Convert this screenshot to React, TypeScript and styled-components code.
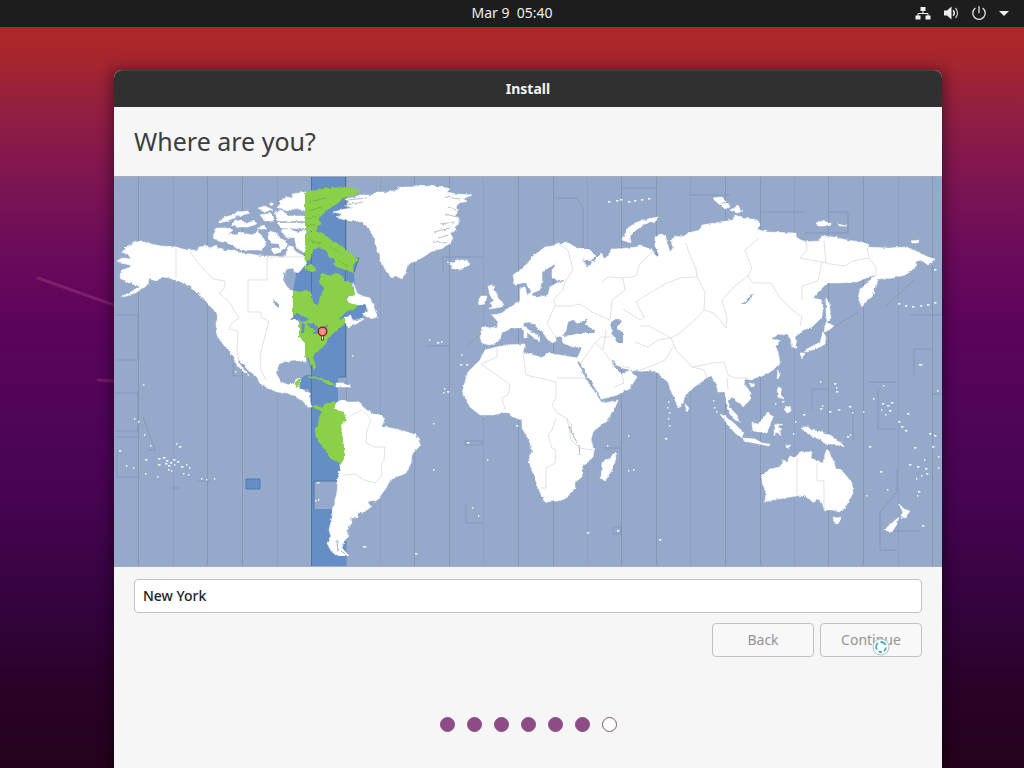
import React from "react";
import styled, { createGlobalStyle } from "styled-components";

const GlobalStyle = createGlobalStyle`
  *, *::before, *::after { box-sizing: border-box; }
  body { margin: 0; font-family: "Noto Sans", "Open Sans", sans-serif; font-size: 14px; color: #3d3d3d; }
`;

const Desktop = styled.div`
  position: relative;
  display: flex;
  flex-direction: column;
  min-height: 100vh;
  overflow: hidden;
  background: linear-gradient(#b02828 27px, #a5262e 60px, #8f1d45 120px, #7a1453 190px, #690a5b 260px, #5b045b 330px, #4f0558 420px, #450450 510px, #33033d 610px, #2a0228 690px, #24021c 768px);
`;

const Streaks = styled.svg`
  position: absolute;
  left: 0;
  top: 0;
  width: 114px;
  height: 400px;
`;

const TopBar = styled.header`
  position: relative;
  display: grid;
  grid-template-columns: 1fr auto 1fr;
  align-items: center;
  height: 27px;
  padding: 0 15px 2px;
  background: #1d1d1d;
  color: #eeeeee;
`;

const Clock = styled.time`
  grid-column: 2;
  font-size: 14px;
  line-height: 20px;
  white-space: pre;
`;

const StatusArea = styled.div`
  grid-column: 3;
  justify-self: end;
  display: flex;
  align-items: center;
  gap: 12px;

  svg { display: block; }
`;

const Workspace = styled.main`
  position: relative;
  flex: 1;
  display: flex;
  padding: 43px 82px 0 114px;
`;

const InstallerWindow = styled.section`
  flex: 1;
  min-width: 0;
  display: flex;
  flex-direction: column;
  border-radius: 8px 8px 0 0;
  background: #f6f6f6;
  box-shadow: 0 2px 14px 3px rgba(0, 0, 0, 0.42);
`;

const TitleBar = styled.div`
  height: 37px;
  border-top: 1px solid #414141;
  border-radius: 8px 8px 0 0;
  background: #303030;
  color: #f4f4f4;
  font-size: 14px;
  font-weight: 700;
  line-height: 36px;
  text-align: center;
`;

const Heading = styled.h1`
  margin: 0;
  padding: 0 20px;
  font-size: 25px;
  font-weight: 400;
  line-height: 69px;
`;

const MapSvg = styled.svg`
  display: block;
  width: 100%;
  height: auto;
  background: #95aacb;
`;

const Form = styled.form`
  display: flex;
  flex-direction: column;
  gap: 10px;
  padding: 12px 20px 0;
`;

const LocationInput = styled.input`
  width: 100%;
  height: 34px;
  padding: 0 8px 2px;
  border: 1px solid #c2c2c2;
  border-radius: 4px;
  outline: none;
  background: #ffffff;
  color: #222222;
  font: 500 14px/20px "Noto Sans", "Open Sans", sans-serif;
`;

const ButtonRow = styled.div`
  display: flex;
  justify-content: flex-end;
  gap: 6px;
`;

const NavButton = styled.button`
  position: relative;
  width: 102px;
  height: 34px;
  padding: 0;
  border: 1px solid #c2c2c2;
  border-radius: 4px;
  background: #f8f8f8;
  color: #949494;
  font: 400 14px/20px "Noto Sans", "Open Sans", sans-serif;
`;

const BusyPointer = styled.svg`
  position: absolute;
  right: 31px;
  bottom: 0;
`;

const Progress = styled.ol`
  display: flex;
  justify-content: center;
  gap: 12px;
  margin: 60px 0 36px;
  padding: 0;
  list-style: none;
`;

const Step = styled.li<{ $done: boolean }>`
  width: 15px;
  height: 15px;
  border: 1px solid ${(p) => (p.$done ? "#8d4c86" : "#77586f")};
  border-radius: 50%;
  background: ${(p) => (p.$done ? "#8d4c86" : "#ffffff")};
`;

const HOUR_LINES = [138, 173, 207, 242, 277, 311, 346, 380, 414, 449, 483, 518, 553, 587, 621, 656, 690, 725, 760, 794, 828, 863, 898, 932];

const ZONE_BOXES =
  "M115 315H138V360H115M115 393H138V431H115M115 437H138M143 417L155 450H147M117 450V477H138M172 488H180M196 481H210M233 364V376H242M443 272V257H483M553 198H577L583 208V248M621 188H656M690 195H730M805 233H848V212H828M760 212H805M465 441V445H482V441ZM466 503V523H483M605 448H621M613 527H621V534H613ZM812 410V389H828M868 382H896M878 390V429H896M932 394H942M914 375V349H932M880 550V512L897 492V470M880 550H897M893 531H920M832 328L858 312M886 306L914 280M910 315H942M426 346H450M467 346L485 330M853 410V440";

const WHITE_LAND = [
  // Alaska, Canada, United States, Mexico and Central America
  "M121 252L126 249L124 247L132 244L135 242L141 241L151 244L161 246L176 247L186 250L197 250L199 247L207 246L209 249L214 246L224 250L234 250L241 253L251 254L261 256L271 256L281 257L286 255L287 248L291 245L296 252L306 257V263L301 270L297 274L293 268L287 269L284 273L283 280L287 287L294 292V317L300 320V337L305 343L306 362L294 360L284 362L279 364L276 373L281 382L289 385L294 383L296 379L301 378L299 387L300 389L310 393V402L312 407L307 407L304 402L296 397L287 393L277 392L264 386L259 382L257 377L251 372L244 365L239 360L238 362L243 368L249 376L246 374L237 365L231 353L222 343L217 335L216 323L218 317L214 310L208 304L204 300L197 293L191 287L179 281L169 278L161 277L157 281L149 279L148 285L137 292L127 296L121 297L131 292L141 285L134 285L132 282L126 282L120 277L122 270L131 267L130 265L121 263L117 261L122 258L131 259L128 254Z",
  // Arctic islands
  "M213 238L216 228L226 228L233 230L228 234L236 235L240 232L252 235L258 231L264 239L266 245L261 250L240 250L228 243L219 241Z",
  "M218 222L225 217L233 215L236 217L229 220L224 222ZM232 225L235 220L243 221L246 224L254 220L257 224L248 227L238 227ZM233 215L238 212L248 211L249 213L239 216ZM258 208L265 206L273 210L264 212ZM260 215L272 213L274 221L265 221ZM263 225L267 229H257ZM270 231L278 234L280 244L271 243L268 237ZM282 230L289 229L297 232L295 237L286 239ZM279 238L284 240L288 245L283 250L279 246ZM277 223L306 223V229L282 228ZM275 212L282 210L288 216H306V221H278ZM280 201L286 197L293 198L292 194L306 192V211L293 208L288 211L281 208ZM294 233L306 230V254L296 247ZM271 248H282L280 253H273ZM278 205H281V208H278ZM270 203H273V205H270Z",
  // Greenland
  "M333 212L345 209L353 208L345 205L350 202L345 199L355 197L360 195L372 195L377 192L388 192L397 190L400 187L412 187L420 185L434 186L443 187L450 189L447 192L456 194L472 195L463 199L467 201L459 203L456 207L459 210L455 216L459 218L458 225L454 227L457 230L450 233L453 238L450 243L443 248L430 252L425 256L418 260L410 263L407 267L405 273L402 279L396 276L393 278L387 273L383 265L380 261V254L377 252V246L375 244V238L370 230L362 222L350 221L337 218L342 214Z",
  // Labrador, Newfoundland and Nova Scotia
  "M353 282L357 293L362 296L370 298L373 305L368 309L364 305H350L346 300L349 296L355 295ZM369 302L373 305L376 313L378 318L367 317L362 314L368 312ZM345 317L351 316L353 321L364 319L356 324L348 327L345 323Z",
  // Iceland
  "M447 262L453 263L456 260L467 260L469 264L466 267L458 270L451 268L453 265Z",
  // South America
  "M333 402L336 403L341 400L347 402L359 402L364 408L371 413L381 415L384 420L382 427L391 428L404 431L410 433L416 435L420 440L419 447L412 453L411 463L406 473L397 477L390 480L387 487L381 495L376 502L367 501L371 507L364 512L357 513V518H351L352 523L346 530L349 535L344 542L342 548L349 556L337 556L331 551L327 543L331 537L329 530L332 517L333 507L337 493L338 477L341 464L343 440L340 425V411L334 409Z",
  // Europe, Asia and Africa
  "M513 275L520 270L528 263L532 257L537 253L545 247L552 246L558 243L562 244L565 242L570 244L577 248L590 250L596 256L590 261L582 259L587 267L595 260L602 253L603 258L610 255L611 249L618 249L637 247L640 245L647 248L652 250L657 257L659 255L655 246L655 237L662 233L666 237L667 243L670 252L673 248L671 241L674 236L683 237L688 233L700 230L702 225L720 222L733 220L735 215L745 218L757 220L761 224L757 229L767 232L795 233L797 238L805 242L818 241L822 236L833 237L847 240L867 243L868 247L887 248L907 247L920 253L928 257L935 259L933 262L928 265L921 260L915 262L917 265L912 270L905 275L893 278L878 279L875 287L873 295L868 299L862 307L858 298L860 290L868 282L876 275L868 277L857 282L837 283L827 283L817 293L813 298L822 300L823 307L822 317L812 327L803 330L795 337L797 348H792L791 340L788 334L782 335L778 334L772 339L781 341L775 346L778 352L780 363L773 370L765 375L755 378L752 380L745 379L744 383L750 392V400L743 407L740 403L732 397L729 400V407L737 415L739 423L733 418L727 408L726 400L725 392L718 392L716 383L712 377L707 378L700 383L693 388L685 395L683 403L679 408L677 405L672 393L668 382L663 378L660 375L655 371H637L627 369L622 368L617 365L612 359V362L615 368L620 373L623 374L630 370L633 373L637 377L630 388L617 395L602 399L599 395L593 383L585 372L579 361L577 362L583 373L588 383L597 395L601 402L605 403L618 400L615 408L607 420L593 432L591 440L594 450L593 457L582 467V477L575 482V488L565 499L557 501L545 502L542 497L538 487L533 473L528 462L532 452L530 442L522 428V420L513 417L505 412L493 415H480L470 407L462 393L465 382L468 372L480 360L485 350L493 348L505 345L525 344L523 352L543 358L548 353L577 358L580 353L582 347L573 347L563 343L562 337L555 335L556 340L553 343L548 340L544 334L538 328L530 322L523 323L526 328L533 333L540 337L537 340L528 333L520 328L510 328L502 333L498 342L490 345L482 343L480 337L482 327L497 328L498 322L492 315L502 313L510 307L520 300V288L525 287L527 295L540 297L548 295L550 287L557 283L568 280L557 280L552 277V270L557 263L550 267L542 272V280L540 290L532 293L528 287L526 282L515 285Z",
  // British Isles, Denmark and the Mediterranean islands
  "M488 286L494 286L492 290L496 292L498 298L503 303L502 307L489 309L493 306L490 303L494 301L490 295ZM481 296H487L485 304L479 305L478 301ZM528 293L532 292V297H529ZM536 339L540 337L539 343ZM524 331H527V338H524Z",
  // Russian Arctic
  "M622 240L628 228L635 223L643 220L658 217L656 221L645 224L636 230L630 236L631 243ZM712 198L722 197L726 201L719 204ZM719 204L727 203L730 206L725 209ZM730 210L738 206L742 211L737 213ZM816 223L822 221L831 223L829 226H818ZM837 224L847 226H840ZM911 241L919 240L918 243H912Z",
  // Japan, Sakhalin, Taiwan and Hainan
  "M826 298L829 302L831 318L827 322L826 312ZM826 322L834 326L829 330L824 332ZM823 332L826 337L825 344L818 348L812 350L807 352L804 351L814 345L820 343ZM800 353L805 353L802 359ZM778 370L780 376L777 378ZM750 383L755 385L751 387Z",
  // South East Asia
  "M720 414L728 418L736 425L743 433L742 438L735 433L728 425ZM743 438L755 439L762 443L770 444L769 446L744 441ZM752 423L758 424L762 420L768 412L773 417L770 425L767 433L760 432L753 431ZM774 425L783 424L777 427L782 429L779 431L781 436L777 432L774 436ZM777 387L782 388L780 394L784 399L778 397ZM784 409L790 405L791 411L787 413ZM802 427L808 427L811 430L823 432L832 436L837 440L845 447L834 444L825 444L821 440L812 436L805 432ZM685 404L689 408L687 412ZM785 446L791 445L788 448Z",
  // Australia, Tasmania and New Zealand
  "M762 475L770 469L780 467L784 460L787 462L790 456L795 458L800 452L812 452L811 457L818 462L823 463L826 450L829 451L831 457L834 460L835 467L843 472L848 478L852 483L853 493L845 508L839 512L833 510L825 510L822 505L820 500L816 499L813 502L803 495L790 497L773 500L765 502L766 492L762 482ZM833 517L837 518L841 517L839 523L836 524ZM898 503L904 509L910 511L905 518L901 517L903 512ZM899 517L897 524L892 532L884 530L892 523Z",
  // Madagascar and Hispaniola
  "M615 452L616 458L612 470L605 481L601 478L602 463L611 457ZM336 383L343 383L351 387L336 387Z",
];

const GREEN_LAND = [
  "M305 193L313 190L323 188L350 187L360 191L355 195L343 198L337 204L332 207L323 214L318 219L322 224L317 226L316 231L305 231Z",
  "M305 234L315 231L323 233L328 238L334 241L340 245L347 250L352 255L359 260L355 262L353 267L354 273L345 270L337 267L333 264L335 260L329 256L327 252L320 247L313 250L311 258L306 262L305 255Z",
  "M303 267L311 264L318 270L312 272L306 270ZM322 273L330 276L337 272L343 277L345 281L352 283L355 295L346 297L349 303L358 305L353 311L345 315V323L337 330L328 338L325 345L317 352L313 357L316 367L314 370L310 362L308 357L305 357V343L299 337V321L293 317V290L300 292L306 290L312 293L313 303L318 305L320 297L324 288L319 282Z",
  "M311 407L316 405L322 408L325 404L334 401L336 404L334 409L344 412L346 420L341 425L342 435L344 447V459L341 464L331 459L326 452L319 442L315 435V428L318 425L319 417L322 412L316 408ZM307 376L313 376L321 378L328 381L337 385H329L320 380L310 377ZM294 385L297 380L301 378L299 386L296 388Z",
];

// Bays, lakes and inland seas that lie over land
const SEAS = "M566 332L568 322L573 320L578 324L588 318L585 325L595 330L594 333L580 333L572 335L562 336ZM610 323L617 318L622 321L617 328L623 333V343H617L613 335ZM741 304L746 300L753 293L751 299L745 304ZM273 299L279 304V308L275 305Z";

const ZONE_BORDERS =
  "M176 247V278M190 252L200 265L213 279L225 281L224 289L219 293L230 303L239 318L232 323L229 329L238 331L237 352L239 361M305 257H267V280H248V312H261V317L269 321L264 340L260 355L261 370L266 380M557 243L568 250L573 270L565 282L563 290L554 299L555 306L570 306L580 304L592 312M555 306L547 323L554 335M592 312L610 320M602 282L608 277L623 278L625 290L612 300L610 320M622 278L636 276L640 264L652 252M623 309L640 320L644 317L636 302L643 297L665 284L680 278L697 277L696 269L688 250L686 243M697 277L705 292L704 310L714 313L726 328L727 318L722 300L735 286L748 276L752 269M752 269L745 250L759 238M748 276L753 283H771L780 298L790 308L802 317L800 326M802 300V286L818 281L822 262L810 260L800 258L807 250L806 240M822 262L831 264L845 266L853 261L869 258L867 248M826 263L824 240M869 258L876 267V276M704 310L695 320L680 333L671 338L660 332L649 326L640 326M671 338L676 350L692 367L704 370L707 378M692 367L714 363L724 362L728 375L735 378L748 378M727 378L728 390M673 347L665 360L652 366L640 370M635 342L648 347L658 340L671 338M606 330L603 350L595 343L601 337L613 337M595 343L580 364M604 352L614 365L630 368M614 387L624 383L622 375M497 348V357L481 364L494 373L510 385L508 395L502 398L505 410M523 352L526 375L548 380L556 382V398L552 405L557 413L566 418L572 425L570 433M557 378H587M556 418L552 430L548 435L552 448L556 450L555 463L546 468V488H541M567 418L571 440L580 448L593 450M362 410L352 415L346 420M364 412L371 420L367 430L366 443L374 447L385 447L384 460L381 465L382 475L375 483L364 480L355 474L343 475M797 458V496M817 463V481H824V510";

const LAKES = "M290 320L297 313L305 317L309 320L302 322L298 319ZM302 323L305 324L304 333L301 333ZM307 323L315 324L319 329L315 331L310 327ZM312 333L318 330L321 332L314 334ZM322 327L329 325L327 328ZM338 320L347 311L359 310L351 315Z";

const ISLETS = [
  [143, 384, 1], [134, 418, 1], [138, 421, 1], [144, 434, 1], [150, 445, 1], [119, 450, 2], [126, 465, 1], [133, 467, 1], [145, 459, 2], [157, 476, 1], [145, 473, 1],
  [176, 443, 1], [179, 446, 2], [158, 458, 2], [163, 457, 2], [166, 460, 2], [170, 462, 2], [173, 459, 2], [168, 469, 1], [177, 461, 2], [181, 466, 2], [186, 464, 1], [183, 473, 1], [189, 467, 1], [188, 474, 1], [158, 464, 2], [171, 470, 1], [165, 463, 2], [168, 465, 2], [174, 464, 1], [201, 478, 1], [206, 479, 1], [214, 478, 1],
  [235, 371, 1], [317, 482, 2], [315, 500, 1], [318, 499, 1], [363, 546, 3], [415, 553, 2], [352, 355, 1], [433, 423, 1], [433, 469, 1], [429, 339, 1], [437, 342, 2], [441, 341, 1], [461, 354, 1], [460, 364, 2], [466, 364, 2], [444, 388, 1], [447, 391, 2], [443, 392, 1],
  [467, 442, 2], [487, 459, 1], [516, 425, 2], [472, 507, 1], [478, 515, 1], [587, 532, 2], [617, 530, 2], [659, 539, 2], [607, 445, 1], [628, 435, 1], [628, 470, 1], [633, 469, 1],
  [668, 401, 1], [667, 407, 1], [669, 412, 1], [668, 418, 1], [669, 425, 1], [665, 438, 2], [713, 400, 1], [714, 407, 1], [716, 411, 1],
  [608, 201, 2], [616, 200, 2], [620, 199, 2], [628, 201, 2], [634, 200, 2], [641, 199, 2], [648, 198, 2], [820, 381, 1], [834, 383, 2], [836, 387, 1], [836, 391, 2], [803, 414, 2], [820, 408, 2], [822, 405, 1], [829, 411, 2], [838, 409, 2], [849, 406, 2], [852, 412, 1], [863, 411, 1], [873, 398, 1], [882, 403, 2], [887, 405, 2], [889, 410, 2], [885, 414, 1], [891, 402, 2], [881, 409, 1], [907, 413, 2], [898, 421, 2], [901, 426, 2], [905, 430, 2], [847, 436, 2], [850, 434, 1], [869, 446, 2], [880, 471, 2], [887, 489, 1], [866, 495, 1], [914, 447, 2], [909, 464, 2], [917, 466, 2], [925, 468, 2], [926, 473, 2], [921, 475, 1], [916, 478, 1], [924, 459, 1], [929, 433, 2], [934, 435, 2], [932, 446, 2], [938, 456, 1], [938, 467, 1], [918, 491, 2], [917, 495, 1], [922, 525, 2], [919, 364, 3], [937, 390, 1], [883, 385, 1],
  [898, 303, 2], [905, 305, 2], [912, 306, 2], [920, 305, 2], [927, 304, 2], [934, 302, 2], [934, 269, 2], [775, 403, 1], [782, 401, 2], [785, 406, 1], [795, 421, 1], [793, 433, 1],
];

const TimezoneMap = () => (
  <MapSvg viewBox="114 176 828 391" role="img" aria-label="Time zone map">
    <defs>
      <filter id="coast" x="0" y="0" width="100%" height="100%">
        <feTurbulence type="fractalNoise" baseFrequency="0.25" numOctaves="2" seed="4" />
        <feDisplacementMap in="SourceGraphic" scale="3" xChannelSelector="R" yChannelSelector="G" />
      </filter>
    </defs>
    <path d="M311 176H346V258H359L354 274L356 296L370 300L362 318L346 320V377H338V401H346V481H314V509H346V567H311V393H309V389H295L298 380L306 375H311V370L303 345L290 320L296 310V292L293 290L297 272L306 262H311Z" fill="#658ec6" />
    <path d="M296 271L306 250L320 246L323 290L319 305H313L311 293L295 291Z" fill="#658ec6" />
    <path d="M246 479H260V489H246Z" fill="#658ec6" stroke="#5179ad" />
    <g fill="none" stroke="#7d8fae" strokeWidth="1">
      {HOUR_LINES.map((x, i) => (
        <path key={x} d={`M${x} 176V567`} transform="translate(.5 0)" opacity={i % 3 === 1 ? 0.35 : 0.7} />
      ))}
      <path d={ZONE_BOXES} opacity="0.65" />
      <path d="M311.500 176V567M345.500 176V377M338 377H346M314 509V481H338M346 258L359 258L354 272" stroke="#55729f" />
    </g>
    <g filter="url(#coast)">
      <g fill="#ffffff" stroke="#ffffff" strokeWidth="0.500">
        {WHITE_LAND.map((d) => <path key={d} d={d} />)}
      </g>
      <g fill="#8ad14a">
        {GREEN_LAND.map((d) => <path key={d} d={d} />)}
      </g>
      <path d={SEAS} fill="#95aacb" />
      <path d={LAKES} fill="#658ec6" />
      <path d="M309 211L321 207M307 219L319 216M305 225H315M309 202L326 198M308 240L321 244M330 246L342 254M337 260L348 266" fill="none" stroke="#72b450" strokeWidth="1" />
      <path d="M344 205L363 202M348 200L367 198M445 197L460 199M448 207L458 211M445 214L457 217M434 232L450 228M438 238L449 235M433 242L447 243M440 224L455 222" fill="none" stroke="#b8bfc9" strokeWidth="1" />
      <path d="M198 292L217 316M184 283L194 293M570 425L572 434L577 442M579 445L580 455M337 540L338 551M341 551L345 554" fill="none" stroke="#a3aebc" strokeWidth="1" />
    </g>
    <path d={ZONE_BORDERS} fill="none" stroke="#d9d2d4" strokeWidth="0.700" />
    <g fill="#f3f8fd">
      {ISLETS.map(([x, y, w]) => <rect key={`${x}-${y}`} x={x} y={y} width={w + 0.4} height="1.600" />)}
    </g>
    <path d="M114 176.500H942M114 566.500H942" stroke="#a5adb8" />
    <path d="M322.500 335V340.500" stroke="#403b30" strokeWidth="2.400" />
    <path d="M322.500 335.500V339.500" stroke="#ffe9dc" strokeWidth="1" />
    <circle cx="322.500" cy="331.500" r="4.300" fill="#f58080" stroke="#8c1616" strokeWidth="1.300" />
    <path d="M320.500 330.500H324.500M321 333H324" stroke="#ffb0a6" />
  </MapSvg>
);

const StatusIcons = () => (
  <StatusArea>
    <svg width="16" height="16" viewBox="0 0 16 16" fill="#eeeeee" aria-label="Network">
      <path d="M5.500 2h5v4h-5zM0.500 10.500h5v4h-5zM10.500 10.500h5v4h-5z" />
      <path d="M8 6v2.500M3 11V8.500h10V11" fill="none" stroke="#eeeeee" />
    </svg>
    <svg width="16" height="16" viewBox="0 0 16 16" aria-label="Volume">
      <path d="M1 5.500h3L8.500 1.500v13L4 10.500H1z" fill="#eeeeee" />
      <path d="M10.200 5.200q2.200 2.800 0 5.600" fill="none" stroke="#eeeeee" strokeWidth="1.400" />
      <path d="M12.500 3q4 5 0 10" fill="none" stroke="#bbbbbb" strokeWidth="1.300" />
    </svg>
    <svg width="16" height="16" viewBox="0 0 16 16" fill="none" stroke="#e4e4e4" strokeWidth="1.300" aria-label="Power">
      <path d="M4.500 3a6.200 6.200 0 1 0 7 0M8 1.200v7" />
    </svg>
    <svg width="10" height="16" viewBox="0 0 10 16" fill="#eeeeee" aria-label="Open menu">
      <path d="M0 6h10l-5 5z" />
    </svg>
  </StatusArea>
);

const STEPS = [true, true, true, true, true, true, false];

export default function App() {
  return (
    <>
      <GlobalStyle />
      <Desktop>
        <Streaks viewBox="0 0 114 400" fill="none" stroke="#a94483" strokeLinecap="round" aria-hidden="true">
          <path d="M38 278L114 305" strokeWidth="3" opacity="0.4" />
          <path d="M98 380L114 381" strokeWidth="3" opacity="0.35" />
        </Streaks>
        <TopBar>
          <Clock>{"Mar 9  05:40"}</Clock>
          <StatusIcons />
        </TopBar>
        <Workspace>
          <InstallerWindow>
            <TitleBar>Install</TitleBar>
            <Heading>Where are you?</Heading>
            <TimezoneMap />
            <Form onSubmit={(e) => e.preventDefault()}>
              <LocationInput type="text" aria-label="Location" defaultValue="New York" />
              <ButtonRow>
                <NavButton type="button" disabled>Back</NavButton>
                <NavButton type="submit" disabled>
                  Continue
                  <BusyPointer width="18" height="18" viewBox="0 0 18 18" fill="none" aria-hidden="true">
                    <circle cx="9" cy="9" r="8" fill="#ffffff" fillOpacity="0.900" stroke="#b5c3c6" />
                    <path d="M5 11.800A5 5 0 0 1 6 5M8.500 4A5 5 0 0 1 13.500 7M14 9.500A5 5 0 0 1 12 13M10 14A5 5 0 0 1 6.500 13.300" stroke="#3fb3c4" strokeWidth="1.800" />
                  </BusyPointer>
                </NavButton>
              </ButtonRow>
            </Form>
            <Progress aria-label="Installation progress">
              {STEPS.map((done, i) => <Step key={i} $done={done} />)}
            </Progress>
          </InstallerWindow>
        </Workspace>
      </Desktop>
    </>
  );
}
